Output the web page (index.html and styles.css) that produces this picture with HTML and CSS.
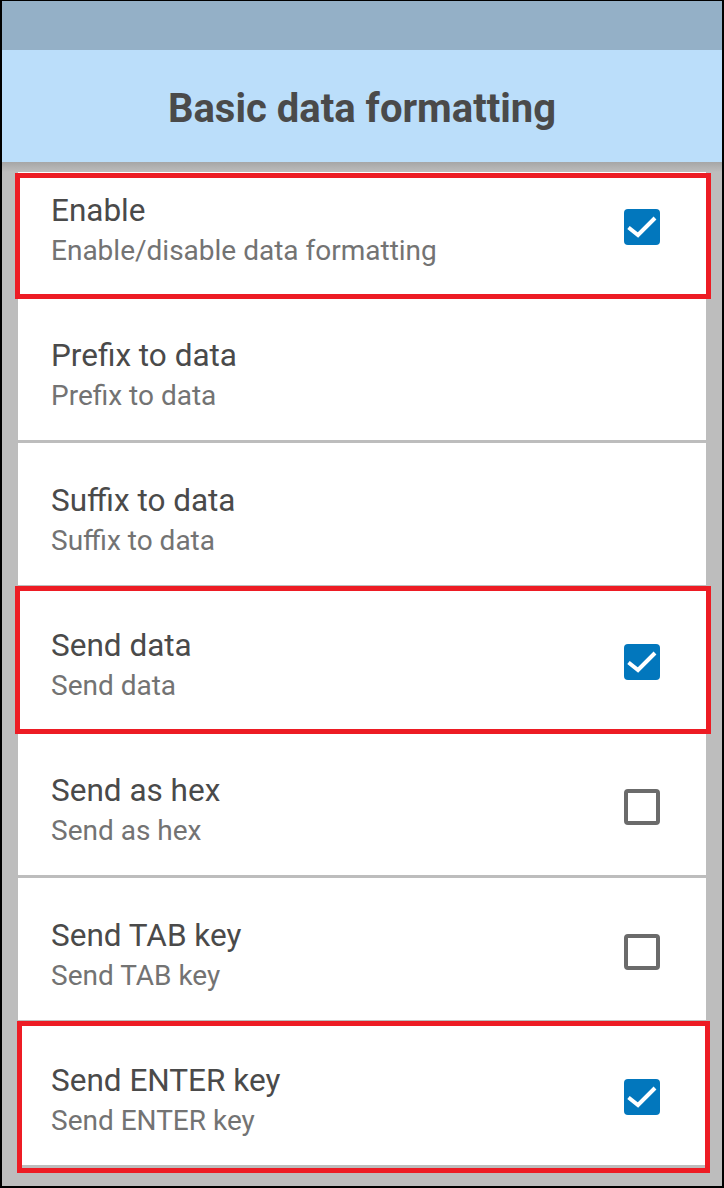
FILE: index.html
```html
<!DOCTYPE html>
<html lang="en">
<head>
    <meta charset="UTF-8">
    <meta name="viewport" content="width=device-width, initial-scale=1.0">
    <title>Basic data formatting</title>
    <link rel="stylesheet" href="styles.css">
</head>
<body>
    <div class="screen">
        <div class="status-bar"></div>

        <!-- toolbar -->
        <div class="toolbar">
            <h1>Basic data formatting</h1>
        </div>

        <!-- settings list -->
        <div class="list">
            <div class="row cut marked mark-top">
                <div class="text">
                    <div class="title">Enable</div>
                    <div class="summary">Enable/disable data formatting</div>
                </div>
                <span class="check on">
                    <svg viewBox="0 0 36 36" width="36" height="36"><path d="M4.5 18.5 L14 26 L31 9" fill="none" stroke="#fff" stroke-width="4"/></svg>
                </span>
            </div>

            <div class="row">
                <div class="text">
                    <div class="title">Prefix to data</div>
                    <div class="summary">Prefix to data</div>
                </div>
            </div>

            <div class="row">
                <div class="text">
                    <div class="title">Suffix to data</div>
                    <div class="summary">Suffix to data</div>
                </div>
            </div>

            <div class="row marked mark-mid">
                <div class="text">
                    <div class="title">Send data</div>
                    <div class="summary">Send data</div>
                </div>
                <span class="check on">
                    <svg viewBox="0 0 36 36" width="36" height="36"><path d="M4.5 18.5 L14 26 L31 9" fill="none" stroke="#fff" stroke-width="4"/></svg>
                </span>
            </div>

            <div class="row">
                <div class="text">
                    <div class="title">Send as hex</div>
                    <div class="summary">Send as hex</div>
                </div>
                <span class="check"></span>
            </div>

            <div class="row">
                <div class="text">
                    <div class="title">Send TAB key</div>
                    <div class="summary">Send TAB key</div>
                </div>
                <span class="check"></span>
            </div>

            <div class="row marked mark-bottom">
                <div class="text">
                    <div class="title">Send ENTER key</div>
                    <div class="summary">Send ENTER key</div>
                </div>
                <span class="check on">
                    <svg viewBox="0 0 36 36" width="36" height="36"><path d="M4.5 18.5 L14 26 L31 9" fill="none" stroke="#fff" stroke-width="4"/></svg>
                </span>
            </div>
        </div>
    </div>
</body>
</html>
```

FILE: styles.css
```css
/* styles.css */
body {
    margin: 0;
    font-family: Roboto, "Liberation Sans", sans-serif;
    background-color: white;
}

.screen {
    width: 724px;
    height: 1188px;
    box-sizing: border-box;
    border: 2px solid #000;
    border-top-width: 1px;
    display: flex;
    flex-direction: column;
    overflow: hidden;
}

.status-bar {
    height: 49px;
    background-color: #94b0c7;
    flex-shrink: 0;
}

.toolbar {
    position: relative;
    z-index: 3;
    height: 112px;
    flex-shrink: 0;
    background-color: #bbdefa;
    display: flex;
    align-items: center;
    justify-content: center;
}

/* shadow falling on the list */
.toolbar::after {
    content: "";
    position: absolute;
    left: 0;
    right: 0;
    top: 100%;
    height: 10px;
    background: linear-gradient(#a6a6a6, #bdbdbd);
}

h1 {
    margin: 0;
    padding-top: 4px;
    font-size: 40px;
    font-weight: bold;
    color: #4a4a4a;
}

.list {
    flex: 1;
    background-color: #bdbdbd;
    padding: 0 16px;
    overflow: hidden;
}

.row {
    position: relative;
    height: 142px;
    box-sizing: border-box;
    padding: 6px 46px 0 33px;
    margin-bottom: 3px;
    background-color: white;
    display: flex;
    align-items: center;
}

.row.cut {
    margin-top: -9px;
}

.text {
    flex: 1;
    padding-top: 10px;
}

.title {
    font-size: 31.5px;
    line-height: 36px;
    color: #4a4a4a;
}

.summary {
    font-size: 28px;
    line-height: 43px;
    color: #737373;
}

.check {
    width: 36px;
    height: 36px;
    box-sizing: border-box;
    border: 4px solid #6b6b6b;
    border-radius: 4px;
    display: block;
}

.check.on {
    border: none;
    background-color: #0277bd;
}

.check svg {
    display: block;
}

/* red annotation frames */
.marked::after {
    content: "";
    position: absolute;
    z-index: 2;
    border: 5px solid #ed1c24;
}

.mark-top::after {
    left: -3px;
    right: -5px;
    top: 20px;
    bottom: -4px;
}

.mark-mid::after {
    left: -3px;
    right: -5px;
    top: -2px;
    bottom: -4px;
}

.mark-bottom::after {
    left: -1px;
    right: -4px;
    top: -2px;
    bottom: -8px;
}
```
